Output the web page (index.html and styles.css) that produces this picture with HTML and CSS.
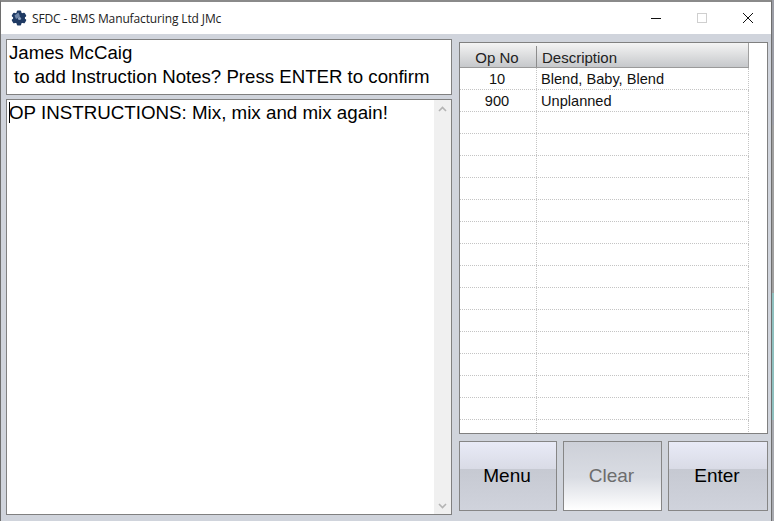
FILE: index.html
```html
<!DOCTYPE html>
<html lang="en">
<head>
<meta charset="utf-8">
<title>SFDC - BMS Manufacturing Ltd JMc</title>
<link rel="stylesheet" href="styles.css">
</head>
<body>
<div class="desktop">
  <div class="window">
    <header class="titlebar">
      <svg class="app-icon" width="18" height="18" viewBox="0 0 18 18">
        <g fill="#1f3a63">
          <circle cx="9" cy="9" r="6"/>
          <rect x="6.8" y="1.5" width="4.4" height="15" rx="1"/>
          <rect x="6.8" y="1.5" width="4.4" height="15" rx="1" transform="rotate(60 9 9)"/>
          <rect x="6.8" y="1.5" width="4.4" height="15" rx="1" transform="rotate(120 9 9)"/>
        </g>
        <path d="M4.5 6.5 L8.5 3.5 L10 7.5 L6 10 Z" fill="#6f86a8"/>
        <circle cx="9.5" cy="9.5" r="1.6" fill="#8fa2bd"/>
      </svg>
      <span class="title">SFDC - BMS Manufacturing Ltd JMc</span>
      <div class="controls">
        <span class="ctl"><svg width="14" height="14" viewBox="0 0 14 14"><path d="M2 7.5H12" stroke="#111" stroke-width="1"/></svg></span>
        <span class="ctl"><svg width="14" height="14" viewBox="0 0 14 14"><rect x="2.5" y="2.5" width="9" height="9" fill="none" stroke="#cfcfcf"/></svg></span>
        <span class="ctl"><svg width="14" height="14" viewBox="0 0 14 14"><path d="M2 2L12 12M12 2L2 12" stroke="#111" stroke-width="1"/></svg></span>
      </div>
    </header>
    <main class="client">
      <section class="left">
        <div class="prompt">
          <div>James McCaig</div>
          <div class="prompt-2">to add Instruction Notes? Press ENTER to confirm</div>
        </div>
        <div class="notes">
          <div class="notes-text"><span class="caret"></span>OP INSTRUCTIONS: Mix, mix and mix again!</div>
          <div class="scrollbar">
            <svg width="9" height="6" viewBox="0 0 9 6"><path d="M1 5L4.5 1.5L8 5" fill="none" stroke="#b4b4b4" stroke-width="1.6"/></svg>
            <svg width="9" height="6" viewBox="0 0 9 6"><path d="M1 1L4.5 4.5L8 1" fill="none" stroke="#b4b4b4" stroke-width="1.6"/></svg>
          </div>
        </div>
      </section>
      <section class="right">
        <div class="grid">
          <div class="grid-inner">
            <div class="row head">
              <div class="c1">Op No</div>
              <div class="c2">Description</div>
            </div>
            <div class="row"><div class="c1">10</div><div class="c2">Blend, Baby, Blend</div></div>
            <div class="row"><div class="c1">900</div><div class="c2">Unplanned</div></div>
            <div class="row"><div class="c1"></div><div class="c2"></div></div>
            <div class="row"><div class="c1"></div><div class="c2"></div></div>
            <div class="row"><div class="c1"></div><div class="c2"></div></div>
            <div class="row"><div class="c1"></div><div class="c2"></div></div>
            <div class="row"><div class="c1"></div><div class="c2"></div></div>
            <div class="row"><div class="c1"></div><div class="c2"></div></div>
            <div class="row"><div class="c1"></div><div class="c2"></div></div>
            <div class="row"><div class="c1"></div><div class="c2"></div></div>
            <div class="row"><div class="c1"></div><div class="c2"></div></div>
            <div class="row"><div class="c1"></div><div class="c2"></div></div>
            <div class="row"><div class="c1"></div><div class="c2"></div></div>
            <div class="row"><div class="c1"></div><div class="c2"></div></div>
            <div class="row"><div class="c1"></div><div class="c2"></div></div>
            <div class="row"><div class="c1"></div><div class="c2"></div></div>
            <div class="row"><div class="c1"></div><div class="c2"></div></div>
          </div>
        </div>
        <div class="buttons">
          <button class="btn btn-menu">Menu</button>
          <button class="btn btn-clear">Clear</button>
          <button class="btn btn-enter">Enter</button>
        </div>
      </section>
    </main>
  </div>
  <div class="backdrop">
    <div class="bd-a"></div>
    <div class="bd-b"></div>
    <div class="bd-c"></div>
    <div class="bd-d"></div>
  </div>
</div>
</body>
</html>
```
FILE: styles.css
```css
* { box-sizing: border-box; }
html, body { margin: 0; padding: 0; }
body { width: 774px; height: 521px; overflow: hidden; font-family: "Liberation Sans", Arial, sans-serif; color: #000; }
.desktop { display: flex; width: 774px; height: 521px; }
.window { width: 772px; height: 521px; display: flex; flex-direction: column; border: 1px solid #6e6e6e; border-top: 2px solid #8a8a8a; border-bottom: 0; background: #d0d4dc; }
.backdrop { width: 2px; height: 521px; display: flex; flex-direction: column; }
.bd-a { height: 125px; background: #9c9ea6; }
.bd-b { height: 168px; background: #a0a0a0; }
.bd-c { height: 127px; background: #8fc0bf; }
.bd-d { flex: 1; background: #a8aab0; }

.titlebar { height: 32px; background: #fff; display: flex; align-items: center; padding-left: 9px; flex-shrink: 0; }
.app-icon { flex-shrink: 0; margin-top: -1px; }
.title { margin-left: 4px; font-family: "Open Sans", sans-serif; font-size: 12px; color: #222; letter-spacing: -0.13px; }
.controls { margin-left: auto; display: flex; }
.ctl { width: 46px; height: 28px; display: flex; align-items: center; justify-content: center; margin-top: -1px; }

.client { flex: 1; display: flex; padding: 5px 3px 6px 5px; min-height: 0; }
.left { width: 446px; display: flex; flex-direction: column; gap: 4px; }
.prompt { height: 56px; background: #fff; border: 1px solid #808080; padding: 1px 2px 0; font-size: 18.65px; line-height: 24px; white-space: nowrap; }
.prompt-2 { padding-left: 5px; }
.notes { flex: 1; display: flex; background: #fff; border: 1px solid #808080; min-height: 0; }
.notes-text { flex: 1; padding: 1px 2px; font-size: 18.75px; line-height: 24px; white-space: nowrap; position: relative; }
.caret { position: absolute; left: 2px; top: 2px; width: 1px; height: 21px; background: #000; }
.scrollbar { width: 17px; background: #f0f0f0; display: flex; flex-direction: column; justify-content: space-between; align-items: center; padding: 6px 0 5px; }

.right { width: 309px; margin-left: 7px; padding-top: 3px; display: flex; flex-direction: column; }
.grid { height: 392px; background: #fff; border: 1px solid #808080; overflow: hidden; }
.grid-inner { width: 289px; }
.row { display: flex; height: 22px; border-bottom: 1px dotted #c4c4c4; border-right: 1px dotted #c4c4c4; font-size: 14.6px; line-height: 22px; color: #111; }
.c1 { width: 77px; text-align: center; border-right: 1px dotted #c4c4c4; flex-shrink: 0; padding-right: 2px; }
.c2 { flex: 1; padding-left: 4px; white-space: nowrap; }
.row.head { height: 25px; border: 0; border-bottom: 1px solid #9a9a9a; border-right: 1px solid #a0a0a0; background: linear-gradient(#f4f4f4, #c6c8cb); color: #222; }
.head .c1 { border-right: 1px solid #8c8c8c; margin: 3px 0 0; line-height: 24px; height: 21px; padding-right: 2px; font-size: 15px; }
.head .c2 { padding-left: 5px; line-height: 29px; font-size: 15px; }

.buttons { display: flex; margin-top: 7px; gap: 6px; height: 70px; }
.btn { height: 70px; padding: 0 2px 0 0; border: 1px solid #868686; font-family: "Liberation Sans", Arial, sans-serif; font-size: 19px; color: #000; }
.btn-menu { width: 98px; }
.btn-clear { width: 99px; color: #6d6d6d; background: linear-gradient(#cdd0d8 0%, #d9dce3 52%, #fff 100%); }
.btn-enter { width: 100px; }
.btn-menu, .btn-enter { background: linear-gradient(#e9ebf7 0%, #d9dbe6 39%, #c6c9d2 40%, #d0d3dc 100%); }
```
